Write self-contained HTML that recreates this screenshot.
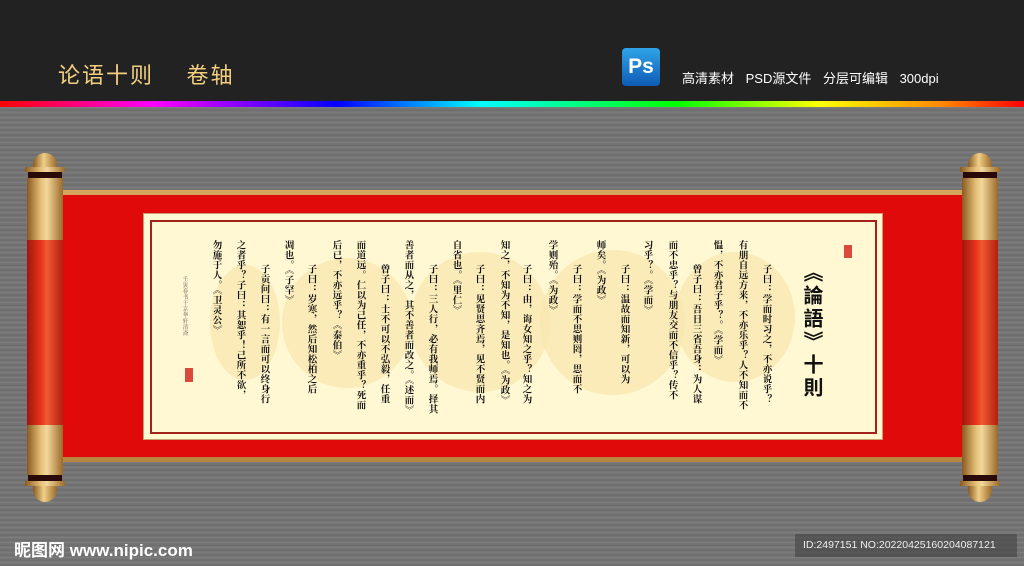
<!DOCTYPE html>
<html><head><meta charset="utf-8"><style>
*{margin:0;padding:0;box-sizing:border-box}
body{width:1024px;height:566px;overflow:hidden;position:relative;font-family:"Liberation Sans","Noto Sans CJK SC",sans-serif;
background:repeating-linear-gradient(180deg,#7a7a7a 0px,#626262 1px,#8a8a8a 2px,#6e6e6e 3px,#7c7c7c 4px,#666 5px);}
.top{position:absolute;left:0;top:0;width:1024px;height:101px;background:#222}
.rain{position:absolute;left:0;top:101px;width:1024px;height:6px;background:linear-gradient(90deg,#f00 0%,#f0f 15%,#00f 33%,#0ff 47%,#0f0 66%,#ff0 80%,#f80 92%,#f00 100%)}
.t1{position:absolute;left:58px;top:58px;color:#f3cf80;font-size:22px;letter-spacing:2px}
.ps{position:absolute;left:622px;top:48px;width:38px;height:38px;border-radius:4px;background:linear-gradient(#2fa4e8,#0f5bb5);color:#fff;font-weight:bold;font-size:21px;text-align:center;line-height:38px}
.t2{position:absolute;left:682px;top:68px;color:#fff;font-size:13px;word-spacing:8px;white-space:nowrap}
.roll{position:absolute;width:40px}
.cap{position:absolute;left:1px;width:38px;background:linear-gradient(90deg,#8a5a20,#e7c27a 40%,#f3d79a 55%,#9a6a2a)}
.knob{position:absolute;left:8px;width:24px;height:16px;background:linear-gradient(90deg,#8a5a20,#f0cf88 45%,#9a6a2a);border-radius:12px 12px 0 0}
.body{position:absolute;left:2px;width:36px;background:linear-gradient(90deg,#a0160c,#e8361e 40%,#f05a30 55%,#b41e10)}
.red{position:absolute;left:62px;top:190px;width:900px;height:272px;background:#e00a0a;border-top:5px solid #d4a55a;border-bottom:5px solid #b88640}
.paper{position:absolute;left:143px;top:213px;width:740px;height:227px;background:#fff8d2;border:1px solid #c9a070}
.inner{position:absolute;left:150px;top:220px;width:727px;height:214px;border:2px solid #a0221a}
.circ{position:absolute;border-radius:50%;background:#f8e7b0;opacity:.75}
.col{position:absolute;writing-mode:vertical-rl;font-family:"Noto Serif CJK SC","WenQuanYi Zen Hei",serif;font-size:9.5px;font-weight:bold;color:#111;letter-spacing:0.5px;white-space:nowrap;line-height:1}
.title{position:absolute;left:799px;top:262px;writing-mode:vertical-rl;font-size:20px;font-weight:bold;color:#111;font-family:"Noto Sans CJK TC",sans-serif;letter-spacing:3px}
.seal{position:absolute;background:#d94a3a}
.wm{position:absolute;left:14px;top:536px;color:#fff;font-size:17px;font-weight:bold}
.id{position:absolute;left:795px;top:534px;width:222px;height:23px;background:rgba(60,60,60,.55);color:#eee;font-size:10.5px;line-height:23px;padding-left:8px;white-space:nowrap}
</style></head><body>
<div class="top"></div><div class="rain"></div>
<div class="t1">论语十则&nbsp;&nbsp;&nbsp;&nbsp;卷轴</div>
<div class="ps">Ps</div>
<div class="t2">高清素材 PSD源文件 分层可编辑 300dpi</div>

<div class="red"></div>
<div class="paper"></div>
<div class="circ" style="left:282px;top:258px;width:130px;height:130px"></div>
<div class="circ" style="left:410px;top:252px;width:140px;height:140px"></div>
<div class="circ" style="left:540px;top:250px;width:145px;height:145px"></div>
<div class="circ" style="left:675px;top:252px;width:120px;height:130px"></div>
<div class="circ" style="left:210px;top:265px;width:70px;height:115px"></div>
<div class="inner"></div>

<div class="title">《論語》十則</div>
<div class="seal" style="left:844px;top:245px;width:8px;height:13px"></div>
<div class="seal" style="left:185px;top:368px;width:8px;height:14px"></div>
<div class="col" style="left:182px;top:276px;font-size:5.5px;color:#555;font-weight:normal">壬寅春书于京华轩清斋</div>

<div class="col" style="left:762px;top:264px">子曰：学而时习之，不亦说乎？</div>
<div class="col" style="left:738px;top:240px">有朋自远方来，不亦乐乎？人不知而不</div>
<div class="col" style="left:713px;top:240px">愠，不亦君子乎？。《学而》</div>
<div class="col" style="left:692px;top:264px">曾子曰：吾日三省吾身：为人谋</div>
<div class="col" style="left:668px;top:240px">而不忠乎？与朋友交而不信乎？传不</div>
<div class="col" style="left:643px;top:240px">习乎？。《学而》</div>
<div class="col" style="left:620px;top:264px">子曰：温故而知新，可以为</div>
<div class="col" style="left:596px;top:240px">师矣。《为政》</div>
<div class="col" style="left:572px;top:264px">子曰：学而不思则罔，思而不</div>
<div class="col" style="left:548px;top:240px">学则殆。《为政》</div>
<div class="col" style="left:522px;top:264px">子曰：由，诲女知之乎？知之为</div>
<div class="col" style="left:500px;top:240px">知之，不知为不知，是知也。《为政》</div>
<div class="col" style="left:475px;top:264px">子曰：见贤思齐焉，见不贤而内</div>
<div class="col" style="left:452px;top:240px">自省也。《里仁》</div>
<div class="col" style="left:428px;top:264px">子曰：三人行，必有我师焉。择其</div>
<div class="col" style="left:404px;top:240px">善者而从之，其不善者而改之。《述而》</div>
<div class="col" style="left:380px;top:264px">曾子曰：士不可以不弘毅，任重</div>
<div class="col" style="left:356px;top:240px">而道远。仁以为己任，不亦重乎？死而</div>
<div class="col" style="left:332px;top:240px">后已，不亦远乎？《泰伯》</div>
<div class="col" style="left:307px;top:264px">子曰：岁寒，然后知松柏之后</div>
<div class="col" style="left:284px;top:240px">凋也。《子罕》</div>
<div class="col" style="left:260px;top:264px">子贡问曰：有一言而可以终身行</div>
<div class="col" style="left:236px;top:240px">之者乎？子曰：其恕乎！己所不欲，</div>
<div class="col" style="left:212px;top:240px">勿施于人。《卫灵公》</div>

<div class="roll" style="left:25px;top:153px;height:348px">
  <div class="knob" style="top:0"></div>
  <div class="cap" style="top:14px;height:5px;left:0;width:40px"></div>
  <div style="position:absolute;left:3px;top:19px;width:34px;height:6px;background:#2a0a08"></div>
  <div class="cap" style="top:25px;height:62px;left:2px;width:36px"></div>
  <div class="body" style="top:87px;height:185px"></div>
  <div class="cap" style="top:272px;height:50px;left:2px;width:36px"></div>
  <div style="position:absolute;left:3px;top:322px;width:34px;height:6px;background:#2a0a08"></div>
  <div class="cap" style="top:328px;height:5px;left:0;width:40px"></div>
  <div class="knob" style="top:333px;border-radius:0 0 12px 12px"></div>
</div>
<div class="roll" style="left:960px;top:153px;height:348px">
  <div class="knob" style="top:0"></div>
  <div class="cap" style="top:14px;height:5px;left:0;width:40px"></div>
  <div style="position:absolute;left:3px;top:19px;width:34px;height:6px;background:#2a0a08"></div>
  <div class="cap" style="top:25px;height:62px;left:2px;width:36px"></div>
  <div class="body" style="top:87px;height:185px"></div>
  <div class="cap" style="top:272px;height:50px;left:2px;width:36px"></div>
  <div style="position:absolute;left:3px;top:322px;width:34px;height:6px;background:#2a0a08"></div>
  <div class="cap" style="top:328px;height:5px;left:0;width:40px"></div>
  <div class="knob" style="top:333px;border-radius:0 0 12px 12px"></div>
</div>

<div class="wm">昵图网 www.nipic.com</div>
<div class="id">ID:2497151 NO:20220425160204087121</div>
</body></html>
